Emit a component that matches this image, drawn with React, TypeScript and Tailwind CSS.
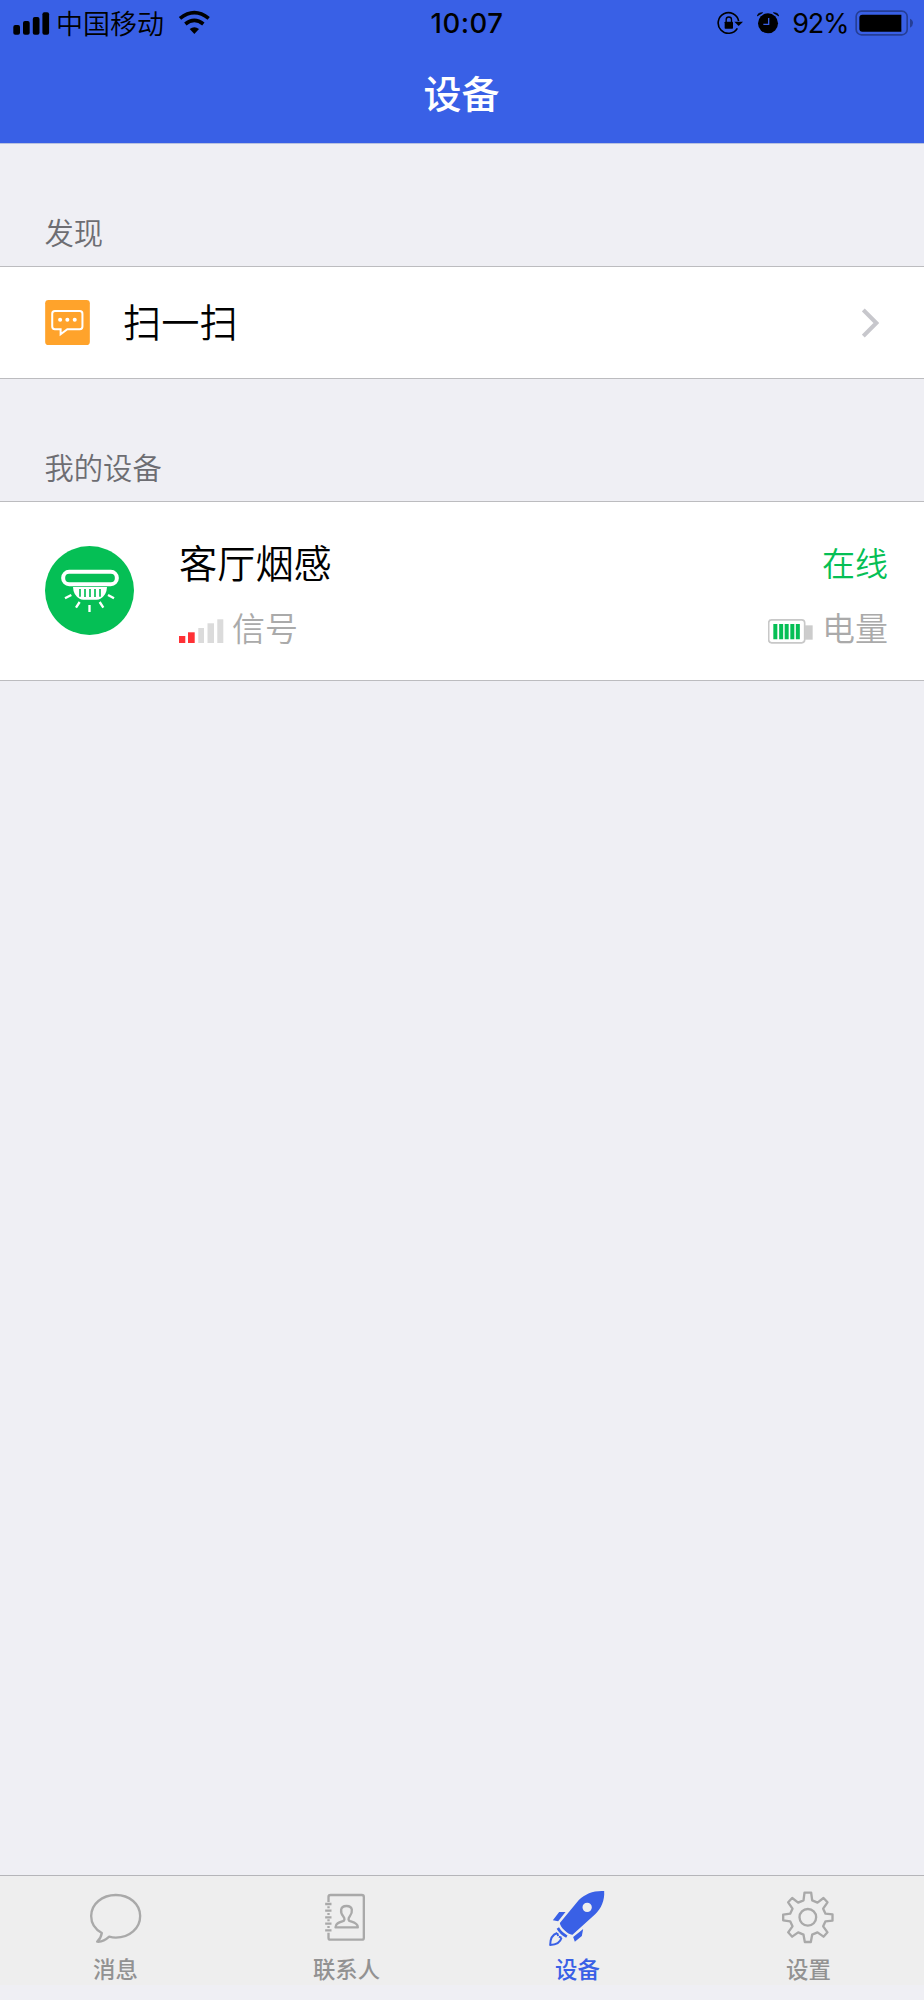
import type { FC, ReactNode } from 'react';
import clsx from 'clsx';

const StatusBar: FC = () => {
  return (
    <div className="grid h-[46px] grid-cols-3 items-center text-black">
      <div className="flex items-center pl-[13px]">
        <svg viewBox="0 0 37 23" className="h-[23px] w-[37px]" fill="currentColor">
          <rect x="0.3" y="13" width="6.7" height="9.7" rx="2" />
          <rect x="10" y="9" width="6.7" height="13.7" rx="2" />
          <rect x="19.8" y="5" width="6.7" height="17.7" rx="2" />
          <rect x="29.4" y="0.3" width="6.7" height="22.4" rx="2" />
        </svg>

        <span className="mb-[2px] ml-[6px] text-[27px] leading-none font-[350]">中国移动</span>

        <svg
          viewBox="534 30 98 74"
          className="mb-[1px] ml-[14px] h-[24.7px] w-[32.7px]"
          fill="none"
          stroke="currentColor"
          strokeWidth="11"
        >
          <path d="M540 55 Q583 21 626 55" />
          <path d="M556 72 Q583 50 610 72" />
          <path d="M569 87 Q583 76 597 87 L583 102 Z" fill="currentColor" stroke="none" />
        </svg>
      </div>

      <div className="mt-[2px] pl-[10px] text-center font-[Inter] text-[27.5px] leading-none font-medium tracking-[0.5px]">
        10:07
      </div>

      <div className="flex items-center justify-end pr-[10px]">
        <svg viewBox="52 32 78 72" className="mb-[1px] h-[24px] w-[26px]" fill="currentColor">
          <path
            d="M113 84 A31 31 0 1 1 117 62"
            fill="none"
            stroke="currentColor"
            strokeWidth="5"
          />
          <path d="M104 64 H130 L117 77 Z" />
          <rect x="75" y="64" width="25" height="21" rx="2" />
          <path
            d="M79.5 65 V58 Q79.5 50 87.5 50 Q95.5 50 95.5 58 V65"
            fill="none"
            stroke="currentColor"
            strokeWidth="4"
          />
        </svg>

        <svg viewBox="173 32 66 72" className="mb-[1px] ml-[14px] h-[24px] w-[22px]">
          <circle cx="206" cy="69" r="30" />
          <path d="M174 47 Q175 37 190 37 Z M238 47 Q237 37 222 37 Z" stroke="#000" strokeWidth="2" />
          <path d="M208 53 V72 H192" fill="none" stroke="#3960e6" strokeWidth="4" />
        </svg>

        <span className="ml-[13px] font-[Inter] text-[27px] leading-none font-normal tracking-[-1.2px]">
          92%
        </span>

        <svg viewBox="464 28 176 78" className="mb-[1px] ml-[7px] h-[26px] w-[58.7px]">
          <rect
            x="467.5"
            y="31.5"
            width="153"
            height="71"
            rx="16"
            fill="none"
            stroke="#253e95"
            strokeWidth="5"
          />
          <path d="M629 54 Q638 58 638 67 Q638 76 629 81 Z" fill="#253e95" />
          <path d="M486 42 H603 V93 H486 Q477 93 477 84 V51 Q477 42 486 42 Z" />
        </svg>
      </div>
    </div>
  );
};

interface SectionProps {
  title: string;
  children: ReactNode;
}

const Section: FC<SectionProps> = ({ title, children }) => {
  return (
    <section>
      <h2 className="flex h-[122px] items-end pb-[19px] pl-[44.5px] text-[29.3px] leading-[32px] font-[350] text-[#6d6d72]">
        {title}
      </h2>

      <div className="border-y border-[#bcbcbf] bg-white">{children}</div>
    </section>
  );
};

const DeviceRow: FC = () => {
  return (
    <div className="flex h-[178px] items-center pr-[36px] pl-[45px]">
      <svg
        viewBox="135 318 267 267"
        className="mb-[1px] size-[89px] shrink-0"
        fill="none"
        stroke="#fff"
      >
        <circle cx="268.5" cy="451.5" r="133.5" fill="#05bf55" stroke="none" />
        <rect x="189.5" y="395.5" width="161" height="37" rx="18" strokeWidth="12" />
        <path
          d="M219 441 H321 Q320 466 301 476 Q297 479 290 479 H250 Q243 479 239 476 Q220 466 219 441 Z"
          fill="#fff"
          stroke="none"
        />
        <path
          d="M240 447 V470 M255 447 V471 M270 447 V471 M285 447 V471 M300 447 V470"
          stroke="#05bf55"
          strokeWidth="5"
        />
        <path
          d="M214 465 L195 475 M239 486 L228 503 M268.5 495 V516 M299 486 L310 503 M324 465 L342 475"
          strokeWidth="7"
        />
      </svg>

      <div className="mt-[6px] ml-[45px] flex grow flex-col gap-[27px] font-[350]">
        <div className="flex items-center justify-between leading-[38px]">
          <span className="text-[38.2px] text-black">客厅烟感</span>
          <span className="text-[33px] text-[#05bf55]">在线</span>
        </div>

        <div className="flex items-center justify-between text-[33px] leading-[38px] text-[#aaa]">
          <div className="flex items-center">
            <svg viewBox="0 0 45 24" className="mt-[9px] h-6 w-[45px]" fill="#dbdbdb">
              <rect x="0" y="17" width="6.3" height="7" fill="#ff3135" />
              <rect x="9" y="13.3" width="6.7" height="10.7" fill="#ff3135" />
              <rect x="19.3" y="9" width="5.7" height="15" />
              <rect x="28.5" y="4.3" width="6.5" height="19.7" />
              <rect x="38.3" y="0.3" width="6" height="23.7" />
            </svg>
            <span className="ml-[8px]">信号</span>
          </div>

          <div className="flex items-center">
            <svg viewBox="83 389 135 74" className="mt-[10px] h-[24.7px] w-[45px]">
              <rect
                x="85"
                y="391.5"
                width="108"
                height="69"
                rx="9"
                fill="#fff"
                stroke="#c8c8c8"
                strokeWidth="5"
              />
              <rect x="193" y="408" width="24" height="43" fill="#ccc" />
              <path
                d="M105 404 V450 M122.5 404 V450 M139 404 V450 M156 404 V450 M172.5 404 V450"
                stroke="#05bf55"
                strokeWidth="12"
              />
            </svg>
            <span className="ml-[9px]">电量</span>
          </div>
        </div>
      </div>
    </div>
  );
};

interface TabProps {
  label: string;
  viewBox: string;
  children: ReactNode;
  isActive?: boolean;
}

const Tab: FC<TabProps> = ({ label, viewBox, children, isActive = false }) => {
  return (
    <a
      className={clsx(
        'flex flex-col items-center pt-[11px]',
        isActive ? 'text-[#3960e6]' : 'text-[#929292]',
      )}
    >
      <svg
        viewBox={viewBox}
        className={clsx('size-[60px]', !isActive && 'text-[#a9a9a9]')}
        fill="none"
        stroke="currentColor"
        strokeWidth="7"
        strokeLinejoin="round"
      >
        {children}
      </svg>
      <span className="mt-[9px] text-[22.4px] leading-6 font-medium">{label}</span>
    </a>
  );
};

const TabBar: FC = () => {
  return (
    <nav className="grid h-[110px] grid-cols-4 border-t border-[#b5b5b9] bg-[#eee]">
      <Tab label="消息" viewBox="107.5 81 180 180">
        <path d="M155 219 C135 208 123 190 123 168 C123 132 156 105 197 105 C238 105 270 132 270 168 C270 205 238 233 197 233 Q187 233 177 230 Q159 247 141 245 Q152 236 155 219 Z" />
      </Tab>

      <Tab label="联系人" viewBox="111.5 81 180 180">
        <path d="M146 126 V111 Q146 105 152 105 H246 Q252 105 252 111 V233 Q252 239 246 239 H152 Q146 239 146 233 V218 M146 139 V145 M146 159 V165 M146 178 V184 M146 198 V204" />
        <path d="M136 132 H155 M136 152 H155 M136 172 H155 M136 191 H155 M136 211 H155" />
        <path d="M167 202 C167 190 178 187 188 184 C196 182 195 175 190 169 C185 163 183 157 184 149 C185 141 191 138 200 138 C209 138 215 141 216 149 C217 157 215 163 210 169 C205 175 204 182 212 184 C222 187 234 190 234 202 Z" />
      </Tab>

      <Tab label="设备" viewBox="114.5 81 180 180" isActive>
        <path
          d="M283 93 C285 121 274 146 256 163 L188 224 C177 226 150 201 150 189 L207 120 C226 101 253 91 283 93 Z M232 128 A14 14 0 1 0 232 156 A14 14 0 1 0 232 128 Z"
          fill="currentColor"
          fillRule="evenodd"
          stroke="none"
        />
        <path
          d="M167 156 L145 184 L129 181 L148 156 Z M220 207 L216 228 L195 245 L190 231 Z"
          fill="currentColor"
          stroke="none"
        />
        <path d="M144 204 Q152 219 171 230" strokeWidth="8" />
        <path
          d="M142 219 C124 225 121 240 121 255 C138 254 151 249 155 233 M142 219 L145 228 M155 233 L147 230"
          strokeWidth="6"
        />
      </Tab>

      <Tab label="设置" viewBox="117.5 81 180 180">
        <circle cx="204" cy="172" r="25" />
        <path d="M194 98 H214 L217 121 L233 128 L251 114 L263 127 L250 146 L257 161 L278 163 V182 L257 184 L250 199 L263 217 L251 230 L233 217 L217 224 L213 246 H195 L191 224 L175 217 L157 230 L145 217 L158 199 L151 184 L130 181 V164 L151 161 L158 146 L145 127 L157 114 L175 128 L191 121 Z" />
      </Tab>
    </nav>
  );
};

const App: FC = () => {
  return (
    <div className="flex h-[2000px] w-[924px] flex-col bg-[#efeff4] pb-[15px] font-['Noto_Sans_CJK_SC',sans-serif]">
      <header className="h-[144px] border-b border-[#b9c2df] bg-[#3960e6]">
        <StatusBar />
        <h1 className="mt-[18px] pr-[1px] text-center text-[38px] leading-[56px] font-medium text-white">
          设备
        </h1>
      </header>

      <main className="grow">
        <Section title="发现">
          <div className="flex h-[111px] items-center pr-[45px] pl-[45px]">
            <svg viewBox="135 300 133 134" className="mb-[1px] size-[45px]">
              <rect x="135" y="300" width="133" height="134" rx="10" fill="#ffa32b" />
              <path
                d="M164 333 H238 Q246 333 246 341 V379 Q246 387 238 387 H201 L181 402 V387 H164 Q156 387 156 379 V341 Q156 333 164 333 Z"
                fill="none"
                stroke="#fff"
                strokeWidth="6"
              />
              <path
                d="M179.5 359 h0.1 M201 359 h0.1 M223 359 h0.1"
                stroke="#fff"
                strokeWidth="12"
                strokeLinecap="round"
              />
            </svg>
            <span className="mb-[4px] ml-[33px] text-[38.2px] leading-[38px] font-[350] text-black">
              扫一扫
            </span>
            <svg
              viewBox="246 175 51 90"
              className="mt-[1px] ml-auto h-[30px] w-[17px]"
              fill="none"
              stroke="#c7c7cc"
              strokeWidth="12"
            >
              <path d="M250 181 L289 220 L250 259" />
            </svg>
          </div>
        </Section>

        <Section title="我的设备">
          <DeviceRow />
        </Section>
      </main>

      <TabBar />
    </div>
  );
};

export default App;
